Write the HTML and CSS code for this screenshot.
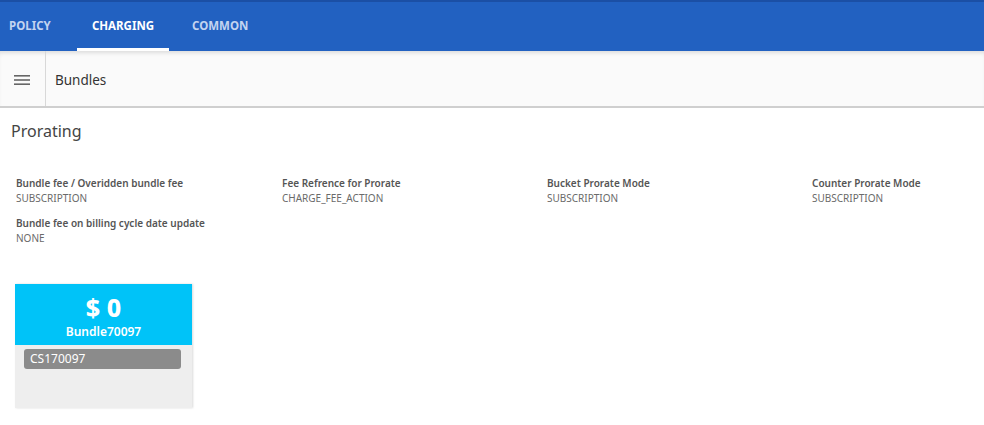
FILE: index.html
```html
<!DOCTYPE html>
<html>
<head>
<meta charset="utf-8">
<link rel="stylesheet" href="styles.css">
</head>
<body>
<header class="topbar">
  <nav class="tabs">
    <a class="tab">POLICY</a>
    <a class="tab active">CHARGING</a>
    <a class="tab">COMMON</a>
  </nav>
</header>
<div class="subbar">
  <div class="menu-btn">
    <svg width="16" height="12" viewBox="0 0 16 12"><rect x="0" y="1" width="16" height="1.6" fill="#666"/><rect x="0" y="5.2" width="16" height="1.6" fill="#666"/><rect x="0" y="9.4" width="16" height="1.6" fill="#666"/></svg>
  </div>
  <div class="subtitle">Bundles</div>
</div>
<main class="content">
  <h1 class="section-title">Prorating</h1>
  <div class="fields">
    <div class="field"><div class="label">Bundle fee / Overidden bundle fee</div><div class="value">SUBSCRIPTION</div></div>
    <div class="field"><div class="label">Fee Refrence for Prorate</div><div class="value">CHARGE_FEE_ACTION</div></div>
    <div class="field"><div class="label">Bucket Prorate Mode</div><div class="value">SUBSCRIPTION</div></div>
    <div class="field"><div class="label">Counter Prorate Mode</div><div class="value">SUBSCRIPTION</div></div>
    <div class="field"><div class="label">Bundle fee on billing cycle date update</div><div class="value">NONE</div></div>
  </div>
  <div class="card">
    <div class="card-head">
      <div class="price">$ 0</div>
      <div class="bundle-name">Bundle70097</div>
    </div>
    <div class="card-body">
      <div class="chip">CS170097</div>
    </div>
  </div>
</main>
</body>
</html>
```
FILE: styles.css
```css
* { box-sizing: border-box; }
html, body { margin: 0; padding: 0; background: #fff; }
body { font-family: "Noto Sans", "Open Sans", sans-serif; width: 984px; height: 425px; overflow: hidden; }
.topbar {
  height: 51px;
  background: #2261c1;
  border-top: 2px solid #1b4fa5;
  display: flex;
  align-items: stretch;
}
.tabs { display: flex; align-items: stretch; padding-left: 0; }
.tab {
  display: flex;
  align-items: center;
  font-size: 11.5px;
  font-weight: 700;
  color: #c3d4f0;
  padding: 0 9px 2px 9px;
  position: relative;
}
.tab:nth-child(1) { width: 77px; }
.tab.active { color: #fff; width: 92px; justify-content: center; padding: 0 0 2px 0; }
.tab.active::after {
  content: "";
  position: absolute;
  left: 0; right: 0; bottom: 0;
  height: 3px;
  background: #fff;
}
.tab:nth-child(3) { padding-left: 23px; }
.subbar {
  height: 57px;
  background: #fafafa;
  display: flex;
  align-items: stretch;
  border-bottom: 2px solid #cfcfcf;
  box-shadow: inset 0 4px 4px -2px rgba(0,0,0,0.12);
}
.menu-btn {
  width: 46px;
  border-right: 1px solid #d8d8d8;
  display: flex;
  align-items: center;
  justify-content: center;
  padding-right: 15px;
  padding-top: 2px;
}
.menu-btn svg { margin-left: 14px; }
.subtitle {
  display: flex;
  align-items: center;
  padding-left: 9px;
  padding-top: 2px;
  font-size: 13.5px;
  color: #333;
}
.content { padding: 0 0 0 11px; }
.section-title {
  font-size: 16px;
  font-weight: 400;
  color: #444;
  margin: 12px 0 0 0;
  line-height: 22px;
}
.fields {
  display: grid;
  grid-template-columns: 266px 265px 265px 160px;
  row-gap: 10px;
  margin: 34px 0 0 5px;
}
.field { display: flex; flex-direction: column; }
.label { font-size: 10px; font-weight: 600; color: #555; line-height: 15px; }
.value { font-size: 10px; color: #6a6a6a; line-height: 15px; }
.card {
  width: 177px;
  margin: 38px 0 0 4px;
  box-shadow: 1px 0 2px rgba(0,0,0,0.15);
}
.card-head {
  height: 61px;
  background: #00c3f8;
  color: #fff;
  display: flex;
  flex-direction: column;
  align-items: center;
  padding-top: 7px;
}
.price { font-size: 25px; font-weight: 800; line-height: 32px; }
.bundle-name { font-size: 12px; font-weight: 600; line-height: 16px; margin-top: 1px; }
.card-body {
  height: 63px;
  background: #eeeeee;
  padding: 4px 11px 0 9px;
}
.chip {
  height: 20px;
  background: #8b8b8b;
  color: #fff;
  border-radius: 3px;
  font-size: 12px;
  line-height: 20px;
  padding-left: 6px;
}
```
